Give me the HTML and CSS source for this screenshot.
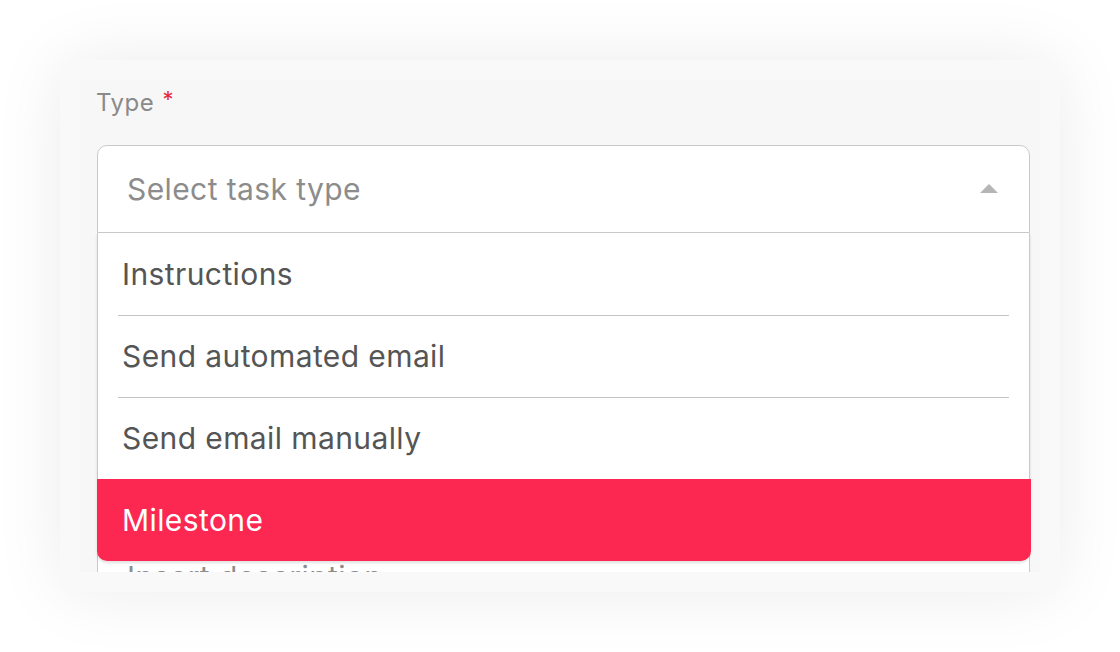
FILE: index.html
```html
<!DOCTYPE html>
<html lang="en">
  <head>
    <title>New task</title>
    <meta charset="utf-8" />
    <link rel="stylesheet" href="styles.css">
  </head>
  <body>
    <div class="card">
      <div class="card-body">
        <div class="label">Type <span class="req">*</span></div>

        <div class="select">
          <div class="select-head">
            <span class="placeholder">Select task type</span>
            <span class="caret"></span>
          </div>
          <ul class="menu">
            <li class="option">Instructions</li>
            <li class="option">Send automated email</li>
            <li class="option">Send email manually</li>
            <li class="option active">Milestone</li>
          </ul>
        </div>

        <div class="textarea">
          <span class="placeholder">Insert description</span>
        </div>
      </div>
    </div>
  </body>
</html>
```

FILE: styles.css
```css
html {
  height: 100%;
}
body {
  margin: 0;
  padding: 60px;
  background: #ffffff;
  font-family: Inter, "Liberation Sans", sans-serif;
  color: #555555;
}

.card {
  width: 1000px;
  height: 532px;
  box-sizing: border-box;
  padding: 20px;
  background: #f9f9f9;
  border-radius: 16px;
  box-shadow: 0 0 70px rgba(0, 0, 0, 0.08);
}

.card-body {
  height: 100%;
  overflow: hidden;
  background: #f7f7f7;
  padding: 6px 17px 0;
  box-sizing: border-box;
}

.label {
  font-size: 24px;
  line-height: 34px;
  color: #8a8a8a;
  letter-spacing: 0.5px;
  margin-left: -1px;
}
.req {
  color: #e3283c;
  font-size: 22px;
  vertical-align: top;
  line-height: 26px;
  margin-left: 1px;
}

.select {
  position: relative;
  margin-top: 25px;
  width: 933px;
}

.select-head {
  height: 88px;
  box-sizing: border-box;
  display: flex;
  align-items: center;
  justify-content: space-between;
  padding: 0 31px 0 29px;
  background: #ffffff;
  border: 1.5px solid #c9c9c9;
  border-radius: 10px 10px 0 0;
}

.placeholder {
  font-size: 30px;
  letter-spacing: 0.4px;
  color: #8c8c8c;
}

.caret {
  width: 0;
  height: 0;
  border-left: 9px solid transparent;
  border-right: 9px solid transparent;
  border-bottom: 9px solid #b5b5b5;
  margin-top: -2px;
}

.menu {
  position: absolute;
  top: 100%;
  left: 0;
  right: 0;
  margin: 0;
  padding: 0;
  list-style: none;
  background: #ffffff;
  border-left: 1.5px solid #c9c9c9;
  border-right: 1.5px solid #c9c9c9;
  border-radius: 0 0 10px 10px;
  box-shadow: 0 2px 3px rgba(0, 0, 0, 0.12);
  z-index: 2;
}

.option {
  position: relative;
  height: 82px;
  display: flex;
  align-items: center;
  padding: 0 24px;
  font-size: 30px;
  letter-spacing: 0.4px;
  color: #555555;
}
.option + .option::before {
  content: "";
  position: absolute;
  top: 0;
  left: 20px;
  right: 20px;
  border-top: 1.5px solid #c4c4c4;
}
.option.active {
  margin: 0 -1.5px;
  padding-left: 25.5px;
  background: #fd2852;
  color: #ffffff;
  border-radius: 0 0 10px 10px;
}
.option.active::before {
  display: none;
}

.textarea {
  margin-top: 303px;
  width: 933px;
  height: 160px;
  box-sizing: border-box;
  padding: 22px 29px;
  background: #ffffff;
  border: 1.5px solid #c9c9c9;
  border-radius: 10px;
}
```
